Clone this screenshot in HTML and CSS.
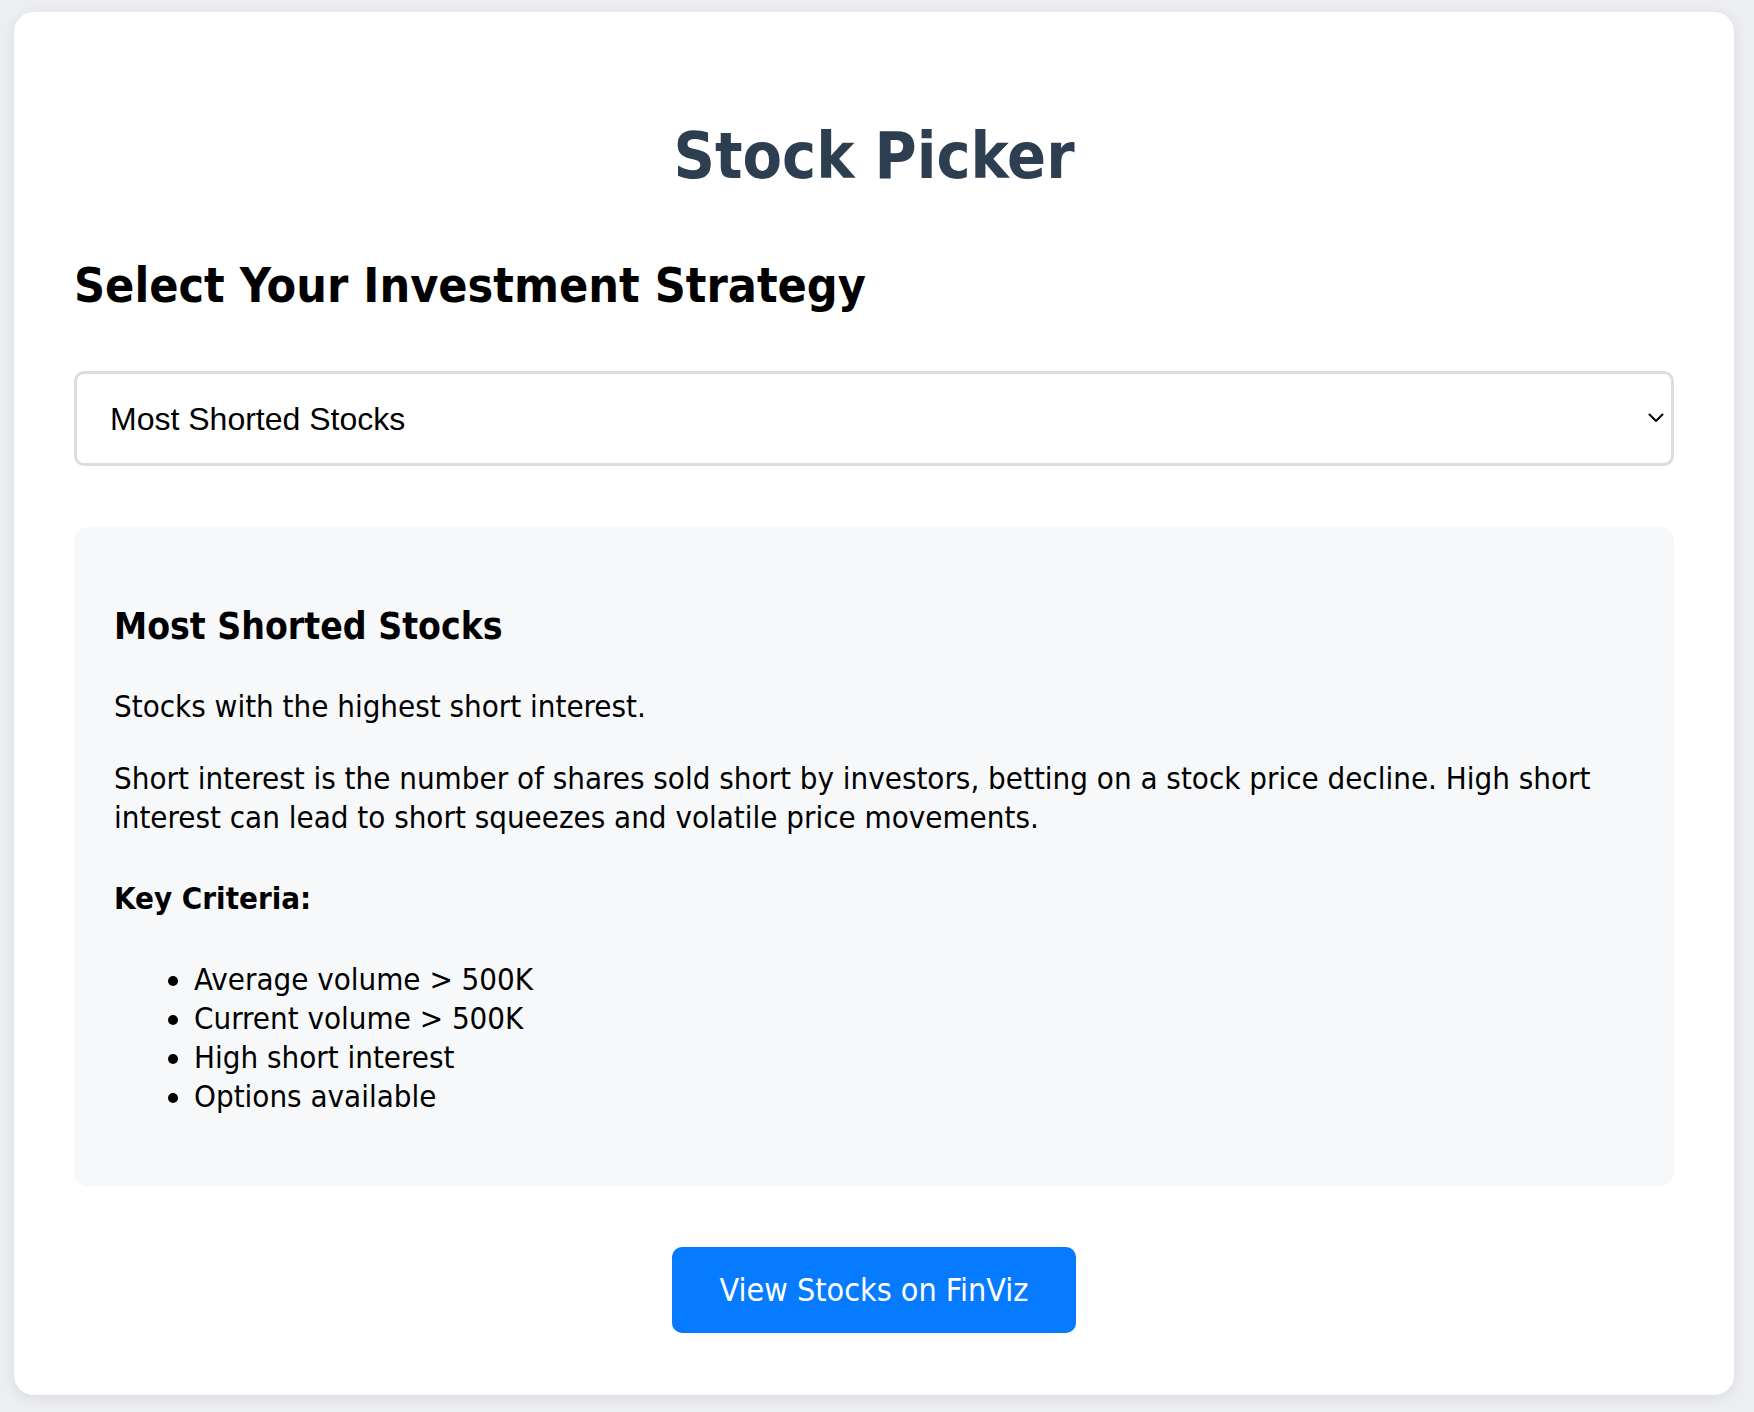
FILE: index.html
```html
<!DOCTYPE html>
<html lang="en">
<head>
<meta charset="utf-8">
<title>Stock Picker</title>
<link rel="stylesheet" href="styles.css">
</head>
<body>
<div class="card">
  <h1 class="title">Stock Picker</h1>
  <h2 class="section-title">Select Your Investment Strategy</h2>
  <div class="select-wrap">
    <select class="strategy-select">
      <option>Most Shorted Stocks</option>
    </select>
    <svg class="chevron" width="16" height="10" viewBox="0 0 16 10"><path d="M1.5 1.5 L8 8 L14.5 1.5" fill="none" stroke="#000" stroke-width="2" stroke-linecap="round" stroke-linejoin="round"/></svg>
  </div>
  <div class="info-box">
    <h3 class="info-title">Most Shorted Stocks</h3>
    <p class="info-text">Stocks with the highest short interest.</p>
    <p class="info-text">Short interest is the number of shares sold short by investors, betting on a stock price decline. High short interest can lead to short squeezes and volatile price movements.</p>
    <h4 class="criteria-title">Key Criteria:</h4>
    <ul class="criteria-list">
      <li>Average volume &gt; 500K</li>
      <li>Current volume &gt; 500K</li>
      <li>High short interest</li>
      <li>Options available</li>
    </ul>
  </div>
  <div class="actions">
    <a class="view-button">View Stocks on FinViz</a>
  </div>
</div>
</body>
</html>
```
FILE: styles.css
```css
html, body {
  margin: 0;
}
body {
  padding: 12px 20px 18px 14px;
  background: #eceef1;
  font-family: "DejaVu Sans Condensed", "DejaVu Sans", sans-serif;
  font-stretch: condensed;
  color: #000;
}
.card {
  background: #fff;
  border-radius: 20px;
  padding: 60px 60px 62px;
  box-shadow: 0 3px 14px rgba(0, 0, 0, 0.08);
}
.title {
  margin: 46px 0 62px;
  font-size: 64px;
  line-height: 76px;
  font-weight: bold;
  text-align: center;
  color: #2c3e50;
}
.section-title {
  margin: 0 0 57px;
  font-size: 48px;
  line-height: 58px;
  font-weight: bold;
}
.select-wrap {
  position: relative;
}
.strategy-select {
  display: block;
  width: 100%;
  height: 95px;
  box-sizing: border-box;
  padding: 0 33px;
  border: 3px solid #dddddd;
  border-radius: 10px;
  background: #fff;
  font-family: "Liberation Sans", Arial, sans-serif;
  font-size: 32px;
  color: #000;
  appearance: none;
  -webkit-appearance: none;
}
.chevron {
  position: absolute;
  right: 10px;
  top: 42px;
  pointer-events: none;
}
.info-box {
  margin-top: 61px;
  background: #f7f8fa;
  border-radius: 14px;
  padding: 40px;
}
.info-title {
  margin: 36px 0 0;
  font-size: 37px;
  line-height: 48px;
  font-weight: bold;
}
.info-text {
  margin: 36px 0 0;
  font-size: 31px;
  line-height: 39px;
}
.info-text + .info-text {
  margin-top: 33px;
}
.criteria-title {
  margin: 42px 0 0;
  font-size: 31px;
  line-height: 39px;
  font-weight: bold;
}
.criteria-list {
  margin: 42px 0 30px;
  padding-left: 80px;
  font-size: 31px;
  line-height: 39px;
}
.actions {
  margin-top: 61px;
  text-align: center;
}
.view-button {
  display: inline-block;
  padding: 23px 48px;
  background: #077bff;
  color: #fff;
  border-radius: 10px;
  font-size: 32px;
  line-height: 40px;
  text-decoration: none;
}
```
